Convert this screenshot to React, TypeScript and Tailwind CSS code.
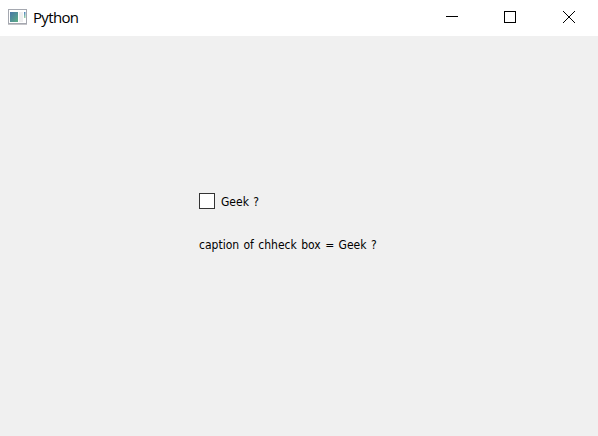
export default function App() {
  return (
    <div className="flex h-[436px] w-[598px] flex-col bg-[#f0f0f0] text-black">
      <header className="flex h-9 items-center bg-white pl-2">
        <svg width="19" height="16" viewBox="0 0 19 16" className="mb-[2px]">
          <defs>
            <linearGradient id="pane" x1="0" y1="0" x2="1" y2="1">
              <stop offset="0" stopColor="#4775a8" />
              <stop offset="1" stopColor="#5dae85" />
            </linearGradient>
            <linearGradient id="strip" x1="0" y1="0" x2="0" y2="1">
              <stop offset="0" stopColor="#4c82c0" />
              <stop offset="1" stopColor="#9bd5a5" />
            </linearGradient>
          </defs>
          <rect x="0.5" y="0.5" width="18" height="14" fill="#fff" stroke="#a5a8b0" />
          <path d="M0 15.5h19" stroke="#c4c4c8" />
          <rect x="2" y="3" width="8" height="10" fill="url(#pane)" />
          <rect x="11" y="3" width="4" height="10" fill="#eeeeef" />
          <rect x="16" y="3" width="1.5" height="6" fill="url(#strip)" />
        </svg>
        <h1 className="mb-[2px] ml-[6px] flex-1 font-['Open_Sans',sans-serif] text-[15px] leading-5 tracking-[-0.65px]">Python</h1>
        <svg width="153" height="36" viewBox="0 0 153 36" fill="none" stroke="#000">
          <path d="M1 16.5h12M59.5 11.5h11v11h-11z" shapeRendering="crispEdges" />
          <path d="M118 11l12 12M130 11l-12 12" />
        </svg>
      </header>
      <main className="flex flex-col pl-[199px] pt-[157px] font-['DejaVu_Sans_Condensed','DejaVu_Sans',sans-serif] text-[12px] leading-4 [word-spacing:1px]">
        <label className="flex h-4 items-center gap-[6px]">
          <span className="size-4 border border-[#333] bg-white" />
          <span className="-mb-[2px]">Geek ?</span>
        </label>
        <p className="mt-7">caption of chheck box = Geek ?</p>
      </main>
    </div>
  );
}
